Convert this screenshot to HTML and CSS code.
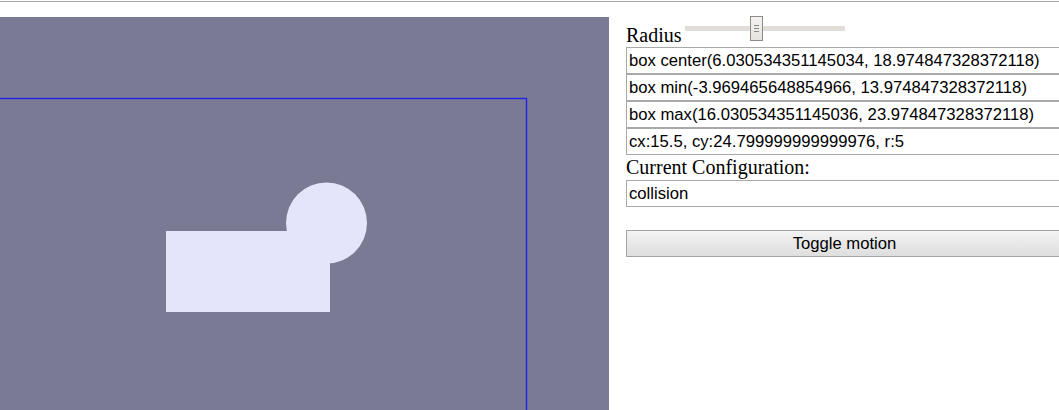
FILE: index.html
```html
<!DOCTYPE html>
<html>
<head>
<meta charset="utf-8">
<link rel="stylesheet" href="styles.css">
</head>
<body>
<div class="topline"></div>
<div class="main">
  <div class="canvas">
    <svg class="scene" width="609" height="400" viewBox="0 0 609 400">
      <rect x="-10" y="81.5" width="536.5" height="400" fill="none" stroke="#2222e6" stroke-width="1.4"/>
      <rect x="166" y="214" width="164" height="81" fill="#e4e4fa"/>
      <circle cx="326.5" cy="206" r="40.5" fill="#e4e4fa"/>
    </svg>
  </div>
  <div class="panel">
    <div class="radius-row">
      <span class="label">Radius</span>
      <div class="slider">
        <div class="track"></div>
        <div class="thumb"><i></i><i></i><i></i></div>
      </div>
    </div>
    <div class="field">box center(6.030534351145034, 18.974847328372118)</div>
    <div class="field">box min(-3.969465648854966, 13.974847328372118)</div>
    <div class="field">box max(16.030534351145036, 23.974847328372118)</div>
    <div class="field">cx:15.5, cy:24.799999999999976, r:5</div>
    <div class="label config">Current Configuration:</div>
    <div class="field">collision</div>
    <button class="toggle">Toggle motion</button>
  </div>
</div>
</body>
</html>
```
FILE: styles.css
```css
html, body {
  margin: 0;
  padding: 0;
  overflow: hidden;
  background: #ffffff;
}
body {
  width: 1059px;
  height: 410px;
  font-family: "Liberation Serif", serif;
}
.topline {
  margin-top: 1px;
  height: 1px;
  background: #aaa6a6;
}
.main {
  display: flex;
  align-items: flex-start;
  margin-top: 15px;
}
.canvas {
  flex: none;
  width: 609px;
  height: 400px;
  background: #7a7a95;
}
.scene {
  display: block;
}
.panel {
  flex: none;
  width: 437px;
  margin-left: 17px;
  margin-top: -1px;
}
.radius-row {
  display: flex;
  align-items: flex-end;
  height: 31px;
}
.label {
  font-family: "Liberation Serif", serif;
  font-size: 20px;
  line-height: 23px;
  color: #000;
}
.slider {
  position: relative;
  width: 160px;
  height: 25px;
  margin-left: 3px;
  margin-bottom: 6px;
}
.track {
  margin-top: 10px;
  height: 5px;
  background: #e1ddd8;
}
.thumb {
  position: absolute;
  left: 65px;
  top: 0;
  width: 11px;
  height: 23px;
  border: 1px solid #8e8a86;
  background: linear-gradient(#f4f3f1, #e6e3df);
  display: flex;
  flex-direction: column;
  align-items: center;
  justify-content: center;
  gap: 2px;
}
.thumb i {
  display: block;
  width: 5px;
  height: 1px;
  background: #8e8a86;
}
.field {
  box-sizing: border-box;
  height: 27px;
  border: 1px solid #a9a9a9;
  padding: 0 2px;
  font-family: "Liberation Sans", Arial, sans-serif;
  font-size: 16.67px;
  line-height: 25px;
  color: #000;
  white-space: nowrap;
}
.config {
  line-height: 25px;
  height: 25px;
}
.toggle {
  display: block;
  box-sizing: border-box;
  width: 437px;
  height: 27px;
  margin: 23px 0 0 0;
  padding: 0;
  border: 1px solid #a3a3a3;
  border-radius: 0;
  background: linear-gradient(#f3f3f3, #e8e8e8 50%, #dedede);
  font-family: "Liberation Sans", Arial, sans-serif;
  font-size: 16.67px;
  color: #000;
}
```
